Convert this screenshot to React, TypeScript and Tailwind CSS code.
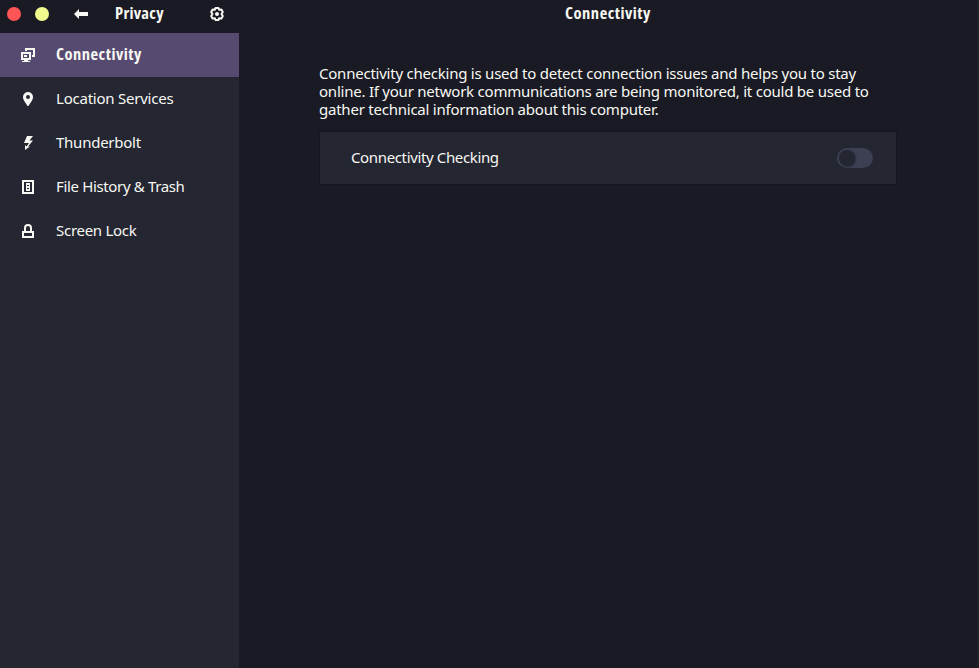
import type { ReactNode } from "react";

function Icon({ children }: { children: ReactNode }) {
  return (
    <svg width="16" height="16" viewBox="0 0 16 16" fill="currentColor" className="shrink-0">
      {children}
    </svg>
  );
}

const items = [
  {
    label: "Connectivity",
    text: "font-['Open_Sans','Noto_Sans',sans-serif] text-[16.5px] font-bold tracking-[0.5px] [font-stretch:75%]",
    icon: (
      <>
        <path d="M5 1h10v9h-3V8h1V3H7v1H5z" />
        <path fillRule="evenodd" d="M1 5h10v8H1z M3 7v4h6V7z" />
        <path d="M4 8h3v2H4zM4 13h4v1H4zM2 14h8v1H2z" />
      </>
    ),
  },
  {
    label: "Location Services",
    text: "tracking-[-0.23px]",
    icon: <path fillRule="evenodd" d="M8 1a5 5 0 0 0-5 5c0 3.500 3 6 4.500 9h1C10 12 13 9.500 13 6a5 5 0 0 0-5-5zm0 3a2 2 0 1 1 0 4 2 2 0 0 1 0-4z" />,
  },
  {
    label: "Thunderbolt",
    text: "tracking-[-0.25px]",
    icon: <path d="M7 1h6L9.500 5.500H13L8 11.500H10L5 15v-5l1.500 1.500L9 8H4z" />,
  },
  {
    label: "File History & Trash",
    text: "tracking-[-0.35px]",
    icon: (
      <>
        <path fillRule="evenodd" d="M2 1h12v14H2zM4 3v10h8V3z" />
        <path fillRule="evenodd" d="M6 4h4v8H6zM7 6v1h2V6zM7 9v1h2V9z" />
      </>
    ),
  },
  {
    label: "Screen Lock",
    text: "tracking-[-0.28px]",
    icon: (
      <>
        <path fillRule="evenodd" d="M2 8h12v7H2zM4 10v3h8v-3z" />
        <path d="M5 9V5a3 3 0 0 1 6 0v4" fill="none" stroke="currentColor" strokeWidth="2" />
      </>
    ),
  },
];

export default function App() {
  return (
    <div className="flex h-[668px] w-[979px] overflow-hidden border-r-2 border-[#20212c] bg-[#191a24] font-['Noto_Sans',sans-serif] text-[15px] leading-[18px] text-[#f8f8f2]">
      <aside className="flex w-[239px] shrink-0 flex-col">
        <header className="flex h-[33px] shrink-0 items-center pb-[5px] pl-[7px]">
          <span className="size-[14px] rounded-full bg-[#ff5555]" />
          <span className="ml-[14px] size-[14px] rounded-full bg-[#f1fa8c]" />
          <svg width="16" height="16" viewBox="0 0 16 16" fill="currentColor" className="ml-[24px]">
            <path d="M1 8l5-5v3h9v4H6v3z" />
          </svg>
          <h1 className="ml-[26px] w-[94px] pb-[2px] font-['Open_Sans','Noto_Sans',sans-serif] text-[16.5px] font-bold tracking-[0.3px] [font-stretch:75%]">Privacy</h1>
          <svg width="16" height="16" viewBox="0 0 16 16" fill="none" stroke="currentColor">
            <path d="M6.500 2h3l.6 1.700 2.300-.2 1.400 2.500-1.300 2 1.300 2-1.400 2.500-2.300-.2-.6 1.700h-3l-.6-1.700-2.300.2L2.200 10l1.300-2-1.300-2 1.400-2.500 2.300.2z" strokeWidth="2" strokeLinejoin="round" />
            <circle cx="8" cy="8" r="2" fill="currentColor" stroke="none" />
          </svg>
        </header>
        <nav className="flex-1 bg-[#242632]">
          {items.map((item, i) => (
            <div key={item.label} className={`flex h-[44px] items-center pl-[20px] ${i === 0 ? "bg-[#574a71]" : ""}`}>
              <Icon>{item.icon}</Icon>
              <span className={`ml-[20px] pb-[2px] whitespace-nowrap ${item.text}`}>{item.label}</span>
            </div>
          ))}
        </nav>
      </aside>
      <main className="flex-1">
        <header className="flex h-[33px] items-center justify-center pb-[7px] font-['Open_Sans','Noto_Sans',sans-serif] text-[16.5px] font-bold tracking-[0.5px] [font-stretch:75%]">
          Connectivity
        </header>
        <section className="ml-[80px] mt-[31px] w-[578px]">
          <p className="tracking-[-0.23px] whitespace-nowrap">
            Connectivity checking is used to detect connection issues and helps you to stay<br />
            online. If your network communications are being monitored, it could be used to<br />
            gather technical information about this computer.
          </p>
          <div className="mt-[13px] flex h-[54px] items-center justify-between border border-[#15151e] bg-[#242632] pl-[31px] pr-[23px]">
            <span className="pb-[2px] tracking-[-0.36px]">Connectivity Checking</span>
            <span className="flex h-5 w-9 items-center rounded-full bg-[#3d3f53] pl-[2px]">
              <span className="size-4 rounded-full bg-[#242632] shadow-[1px_1px_2px_rgba(0,0,0,0.35)]" />
            </span>
          </div>
        </section>
      </main>
    </div>
  );
}
